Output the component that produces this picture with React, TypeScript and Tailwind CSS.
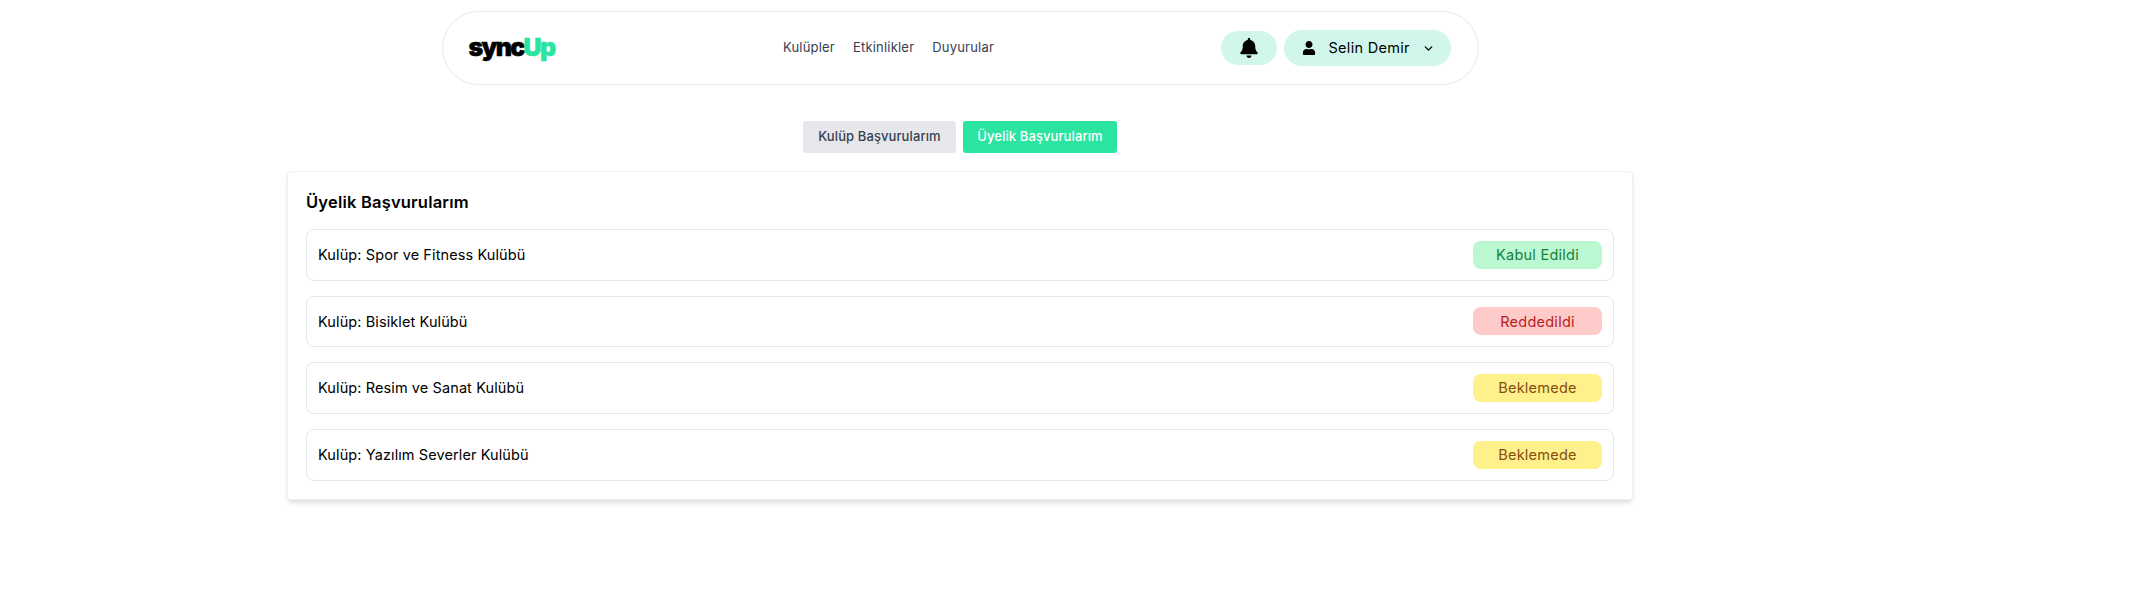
import { ChevronDown } from 'lucide-react';
import { FaBell, FaUser } from 'react-icons/fa';

const navLinks = ['Kulüpler', 'Etkinlikler', 'Duyurular'];

const applications = [
  { club: 'Spor ve Fitness Kulübü', status: 'Kabul Edildi', badge: 'bg-[#bbf7d0] text-[#15803d]' },
  { club: 'Bisiklet Kulübü', status: 'Reddedildi', badge: 'bg-[#fecaca] text-[#b91c1c]' },
  { club: 'Resim ve Sanat Kulübü', status: 'Beklemede', badge: 'bg-[#fef08a] text-[#854d0e]' },
  { club: 'Yazılım Severler Kulübü', status: 'Beklemede', badge: 'bg-[#fef08a] text-[#854d0e]' },
];

export default function App() {
  return (
    <div className="min-h-[610px] w-[1920px] bg-white font-['Inter',sans-serif] text-black">
      {/* Navbar */}
      <div className="flex justify-center pt-[11px]">
        <nav className="flex h-[74px] w-[1037px] items-center justify-between rounded-full border border-[#e5e7eb] bg-white px-[26px]">
          <div className="w-[87px] pb-[2px] text-[25px] leading-none font-black tracking-[-1.7px] [-webkit-text-stroke:0.5px]">
            sync<span className="text-[#2be4a0]">Up</span>
          </div>

          <div className="flex items-center gap-[18px] text-[13px] tracking-[0.2px] text-[#374151]">
            {navLinks.map((link) => (
              <a key={link}>{link}</a>
            ))}
          </div>

          <div className="flex items-center gap-[7px]">
            <button className="flex h-[34px] w-[56px] items-center justify-center rounded-full bg-[#d1f7ec]">
              <FaBell size={20} />
            </button>
            <button className="flex h-[36px] w-[167px] items-center rounded-full bg-[#d1f7ec] pl-[18px]">
              <FaUser size={14} />
              <span className="ml-[12px] text-[14.5px] tracking-[0.3px]">Selin Demir</span>
              <ChevronDown size={13} strokeWidth={2.5} className="ml-[12px]" />
            </button>
          </div>
        </nav>
      </div>

      {/* Tabs */}
      <div className="mt-9 flex justify-center gap-[7px]">
        <button className="h-8 w-[153px] rounded-[3px] bg-[#e5e7eb] text-[13px] font-medium tracking-[0.1px] text-[#374151]">
          Kulüp Başvurularım
        </button>
        <button className="h-8 w-[154px] rounded-[3px] bg-[#2be4a0] text-[13px] font-medium tracking-[0.1px] text-white">
          Üyelik Başvurularım
        </button>
      </div>

      {/* Applications */}
      <div className="mt-[18px] flex justify-center">
        <div className="w-[1346px] rounded border border-[#f0f0f2] bg-white p-[18px] shadow-md">
          <h2 className="mb-[15px] text-[16.5px] leading-6 font-semibold tracking-[0.2px]">Üyelik Başvurularım</h2>
          <div className="flex flex-col gap-[15px]">
            {applications.map((item) => (
              <div
                key={item.club}
                className="flex h-[51.67px] items-center justify-between rounded-lg border border-[#e5e7eb] px-[11px]"
              >
                <span className="text-[14.5px] tracking-[0.1px]">Kulüp: {item.club}</span>
                <span className={`flex h-[28px] w-[129px] items-center justify-center rounded-lg text-[14.5px] tracking-[0.25px] ${item.badge}`}>
                  {item.status}
                </span>
              </div>
            ))}
          </div>
        </div>
      </div>
    </div>
  );
}
